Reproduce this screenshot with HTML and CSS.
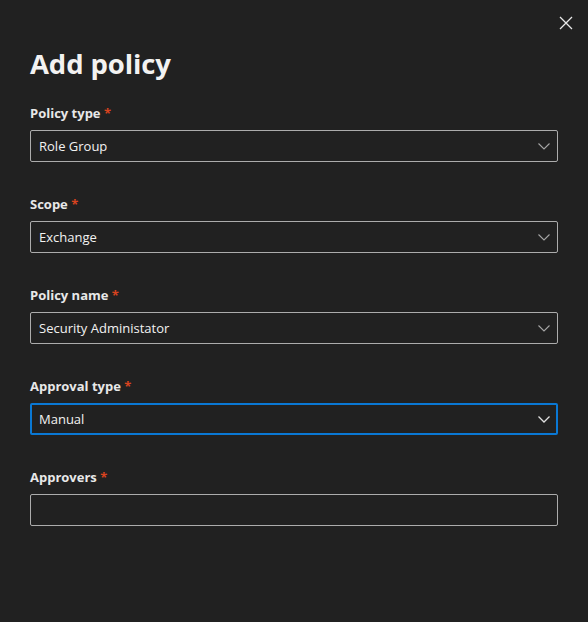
FILE: index.html
```html
<!DOCTYPE html>
<html>
<head>
<meta charset="utf-8">
<link rel="stylesheet" href="styles.css">
</head>
<body>
<div class="panel">
  <div class="topbar">
    <button class="close" aria-label="Close">
      <svg width="14" height="14" viewBox="0 0 14 14"><path d="M1 1L13 13M13 1L1 13" stroke="#e8e8e8" stroke-width="1.3" fill="none"/></svg>
    </button>
  </div>
  <h1 class="title">Add policy</h1>
  <div class="form">
    <div class="field">
      <label class="label">Policy type <span class="req">*</span></label>
      <div class="box"><span class="value">Role Group</span>
        <svg class="chev" width="12" height="7" viewBox="0 0 12 7"><path d="M0.5 0.5L6 6L11.5 0.5" stroke="#a6a6a6" stroke-width="1.1" fill="none"/></svg>
      </div>
    </div>
    <div class="field">
      <label class="label">Scope <span class="req">*</span></label>
      <div class="box"><span class="value">Exchange</span>
        <svg class="chev" width="12" height="7" viewBox="0 0 12 7"><path d="M0.5 0.5L6 6L11.5 0.5" stroke="#a6a6a6" stroke-width="1.1" fill="none"/></svg>
      </div>
    </div>
    <div class="field">
      <label class="label">Policy name <span class="req">*</span></label>
      <div class="box"><span class="value">Security Administator</span>
        <svg class="chev" width="12" height="7" viewBox="0 0 12 7"><path d="M0.5 0.5L6 6L11.5 0.5" stroke="#a6a6a6" stroke-width="1.1" fill="none"/></svg>
      </div>
    </div>
    <div class="field">
      <label class="label">Approval type <span class="req">*</span></label>
      <div class="box focused"><span class="value">Manual</span>
        <svg class="chev" width="12" height="7" viewBox="0 0 12 7"><path d="M0.5 0.5L6 6L11.5 0.5" stroke="#e0e0e0" stroke-width="1.3" fill="none"/></svg>
      </div>
    </div>
    <div class="field">
      <label class="label">Approvers <span class="req">*</span></label>
      <div class="box"></div>
    </div>
  </div>
</div>
</body>
</html>
```
FILE: styles.css
```css
html, body {
  margin: 0;
  padding: 0;
  background: #212121;
  height: 100%;
}
body {
  font-family: "Open Sans", "Noto Sans", sans-serif;
  color: #f3f2f1;
}
.panel {
  width: 588px;
  height: 622px;
  box-sizing: border-box;
  padding: 0 30px;
  display: flex;
  flex-direction: column;
}
.topbar {
  height: 46px;
  display: flex;
  justify-content: flex-end;
  align-items: flex-start;
  margin-right: -15px;
}
.close {
  background: none;
  border: none;
  padding: 0;
  margin-top: 16px;
  width: 14px;
  height: 14px;
  display: flex;
}
.title {
  margin: 0;
  font-size: 27.5px;
  font-weight: 700;
  line-height: 36px;
  color: #f3f2f1;
  letter-spacing: -0.1px;
}
.form {
  margin-top: 18px;
  display: flex;
  flex-direction: column;
  gap: 29px;
}
.field {
  display: flex;
  flex-direction: column;
}
.label {
  font-size: 13px;
  font-weight: 700;
  line-height: 20px;
  padding: 3px 0 7px;
  color: #e8e8e8;
}
.req {
  color: #d8431f;
}
.box {
  height: 32px;
  box-sizing: border-box;
  border: 1px solid #acacac;
  border-radius: 2px;
  display: flex;
  align-items: center;
  justify-content: space-between;
  padding: 0 7px 0 8px;
}
.box.focused {
  border: 2px solid #0a78d4;
  padding: 0 6px 0 7px;
}
.value {
  font-size: 13px;
  color: #f3f2f1;
}
.chev {
  display: block;
  margin-top: 1px;
}
```
